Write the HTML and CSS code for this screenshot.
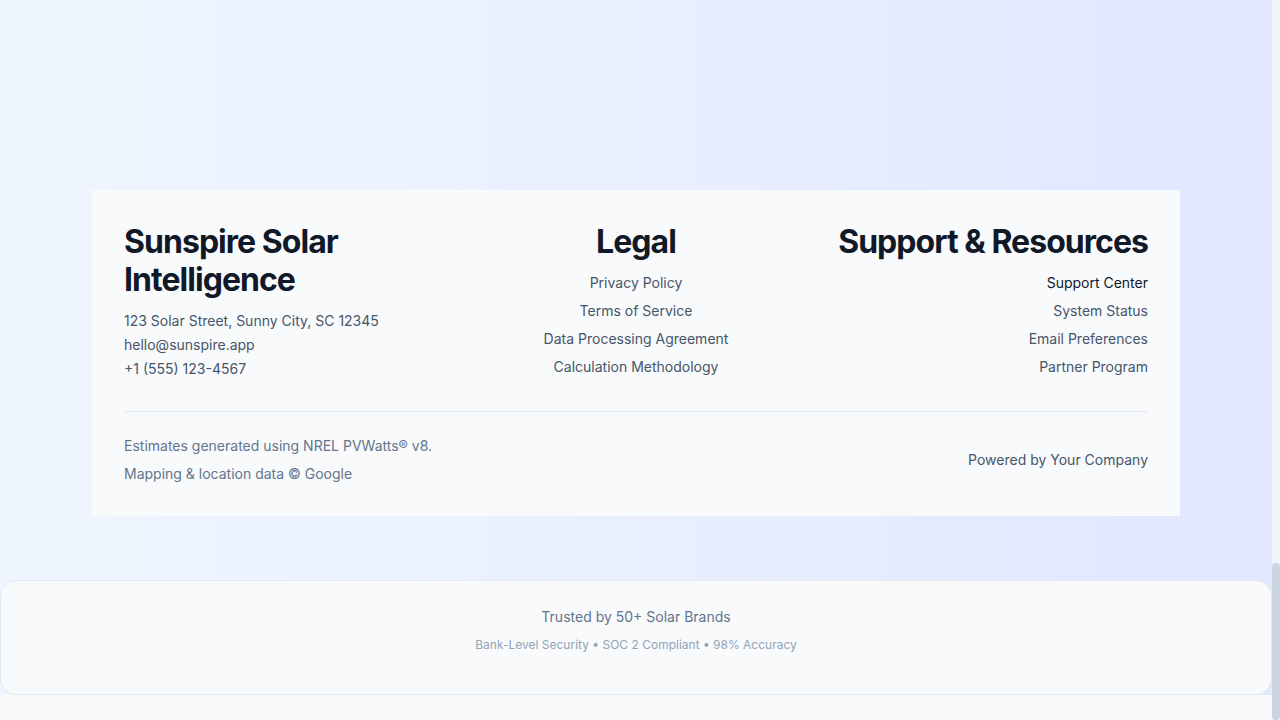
FILE: index.html
```html
<!DOCTYPE html>
<html lang="en">
<head>
<meta charset="utf-8">
<title>Sunspire Solar Intelligence</title>
<link rel="stylesheet" href="styles.css">
</head>
<body>
<div class="viewport">
  <div class="page">
    <main class="page-main">
      <div class="container">
        <footer class="site-footer">
          <div class="footer-grid">
            <div class="col col-left">
              <h2 class="col-title">Sunspire Solar Intelligence</h2>
              <ul class="info-list">
                <li>123 Solar Street, Sunny City, SC 12345</li>
                <li>hello@sunspire.app</li>
                <li>+1 (555) 123-4567</li>
              </ul>
            </div>
            <div class="col col-center">
              <h2 class="col-title">Legal</h2>
              <ul class="link-list">
                <li><a href="#">Privacy Policy</a></li>
                <li><a href="#">Terms of Service</a></li>
                <li><a href="#">Data Processing Agreement</a></li>
                <li><a href="#">Calculation Methodology</a></li>
              </ul>
            </div>
            <div class="col col-right">
              <h2 class="col-title">Support &amp; Resources</h2>
              <ul class="link-list">
                <li><a href="#" class="active">Support Center</a></li>
                <li><a href="#">System Status</a></li>
                <li><a href="#">Email Preferences</a></li>
                <li><a href="#">Partner Program</a></li>
              </ul>
            </div>
          </div>
          <div class="footer-bottom">
            <div class="credits">
              <p>Estimates generated using NREL PVWatts® v8.</p>
              <p>Mapping &amp; location data © Google</p>
            </div>
            <p class="powered">Powered by Your Company</p>
          </div>
        </footer>
      </div>
      <section class="trust">
        <p class="trust-title">Trusted by 50+ Solar Brands</p>
        <p class="trust-sub">Bank-Level Security • SOC 2 Compliant • 98% Accuracy</p>
      </section>
    </main>
    <div class="page-end"></div>
  </div>
  <div class="scroll-rail"><div class="scroll-thumb"></div></div>
</div>
</body>
</html>
```

FILE: styles.css
```css
html,
body {
  margin: 0;
  height: 720px;
  overflow: hidden;
  background: #f8fafc;
}
body {
  font-family: Inter, "Liberation Sans", sans-serif;
  color: #475569;
}
.viewport {
  display: flex;
  height: 720px;
}
.page {
  flex: 1;
  display: flex;
  flex-direction: column;
  min-width: 0;
}
.page-main {
  flex: 1;
  display: flex;
  flex-direction: column;
  padding-top: 190px;
  background: linear-gradient(to right, #eff6ff 0%, #e9efff 50%, #e0e7ff 100%);
}
.container {
  width: 100%;
  max-width: 1152px;
  margin: 0 auto;
  padding: 0 32px;
  box-sizing: border-box;
}
.site-footer {
  background: #f8fafc;
  padding: 33px 32px 32px;
  margin-bottom: 64px;
}
.footer-grid {
  display: grid;
  grid-template-columns: 1fr 1fr 1fr;
  gap: 32px;
}
.col-title {
  margin: 0 0 11px;
  font-size: 32px;
  line-height: 38.4px;
  font-weight: 700;
  letter-spacing: -0.03em;
  color: #111827;
}
.col-center {
  text-align: center;
}
.col-right {
  text-align: right;
}
.info-list,
.link-list {
  list-style: none;
  margin: 0;
  padding: 0;
  font-size: 14px;
  line-height: 20px;
}
.info-list {
  display: flex;
  flex-direction: column;
  gap: 4px;
}
.link-list {
  display: flex;
  flex-direction: column;
  gap: 8px;
  padding-top: 1px;
}
.link-list a {
  color: #475569;
  text-decoration: none;
}
.link-list a.active {
  color: #111827;
}
.footer-bottom {
  margin-top: 32px;
  border-top: 1px solid #e2e8f0;
  padding-top: 24px;
  display: flex;
  justify-content: space-between;
  align-items: center;
  font-size: 14px;
  line-height: 20px;
}
.credits {
  display: flex;
  flex-direction: column;
  gap: 8px;
  color: #64748b;
}
.credits p,
.powered,
.trust p {
  margin: 0;
}
.powered {
  color: #475569;
}
.trust {
  background: #f8fafc;
  border: 1px solid #e2e8f0;
  border-radius: 16px;
  padding: 26px 24px 39px;
  text-align: center;
}
.trust-title {
  font-size: 14px;
  line-height: 20px;
  color: #64748b;
}
.trust-sub {
  margin-top: 8px !important;
  font-size: 12px;
  line-height: 20px;
  color: #94a3b8;
}
.page-end {
  height: 25px;
  flex: none;
  background: #f8fafc;
}
.scroll-rail {
  width: 8px;
  flex: none;
  background: #f1f5f9;
  display: flex;
  flex-direction: column;
  justify-content: flex-end;
}
.scroll-thumb {
  height: 157px;
  background: #cbd5e1;
  border-radius: 4px;
}
```
